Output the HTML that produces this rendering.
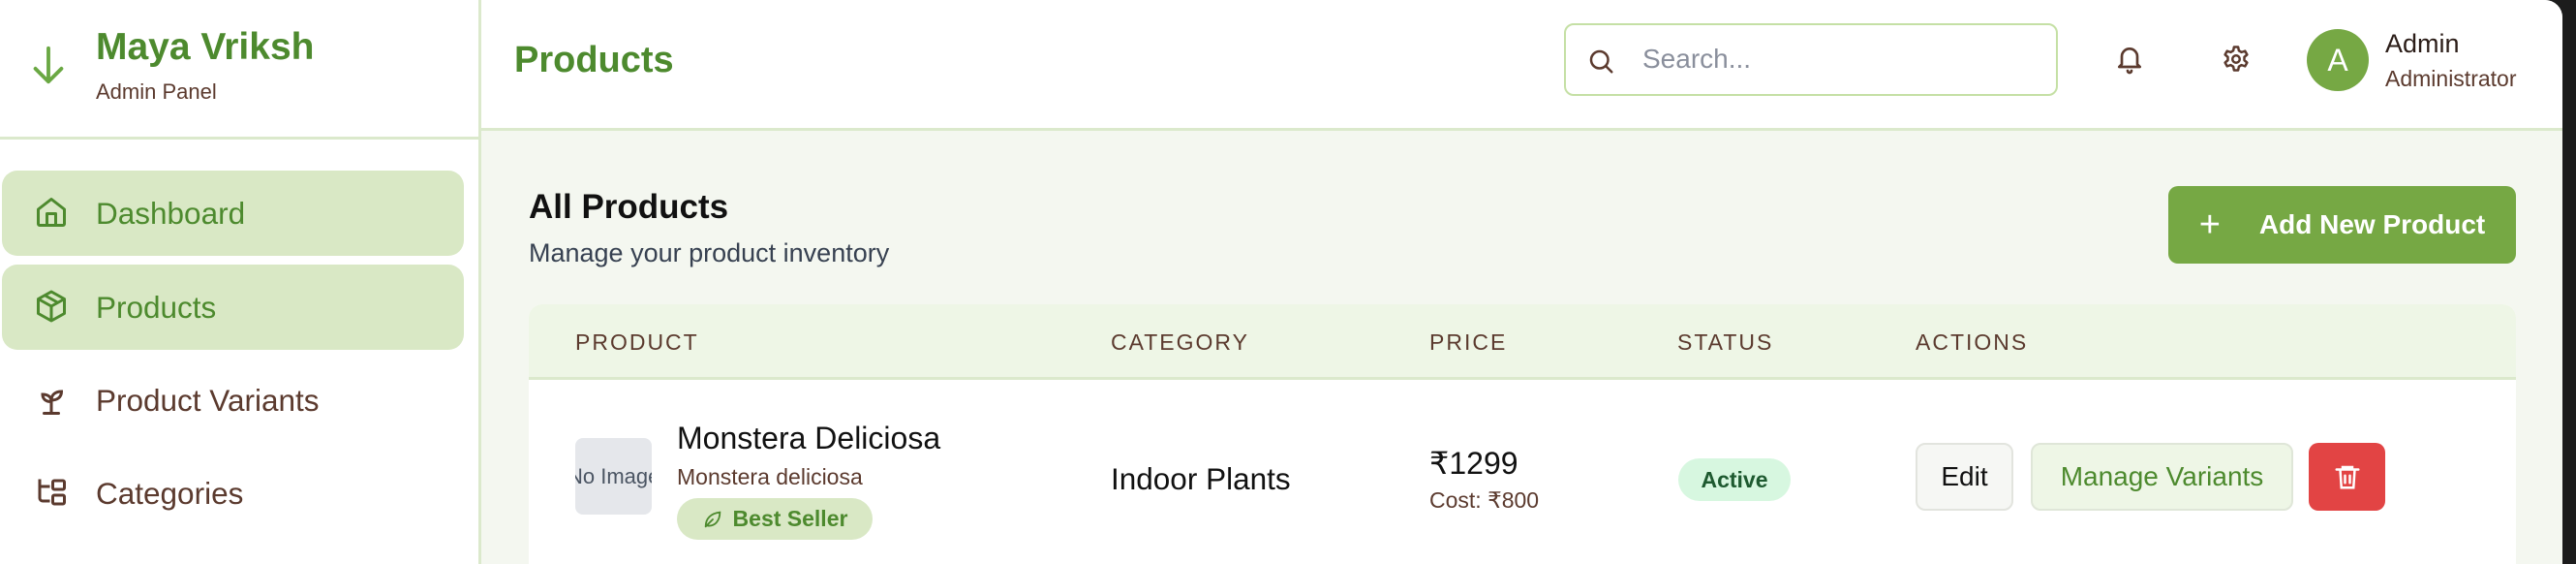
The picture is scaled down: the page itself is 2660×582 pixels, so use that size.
<!DOCTYPE html>
<html><head><meta charset="utf-8"><style>
*{box-sizing:border-box;margin:0;padding:0}
body{width:2660px;height:582px;overflow:hidden;background:#1c1c1c;font-family:"Liberation Sans",sans-serif;position:relative}
.app{position:absolute;left:0;top:0;width:2646px;height:582px;background:#f4f7f0;border-top-right-radius:18px;overflow:hidden}
.a{position:absolute}
.side{left:0;top:0;width:497px;height:582px;background:#fff;border-right:3px solid #dbe9cc}
.nav{left:2px;width:477px;height:88px;border-radius:16px;background:#d9e8c5}
.nt{font-size:31.5px;color:#5b3a2e;left:99px}
.hdr{left:497px;top:0;width:2149px;height:135px;background:#fff;border-bottom:3px solid #dbe9cc}
.th{font-size:23px;letter-spacing:2px;color:#5b3a2e;top:340px}
.btn{border-radius:10px;display:flex;align-items:center;justify-content:center;font-size:28px}
</style></head><body><div class="app">
<div class="a side"></div>
<div class="a" style="left:0;top:141px;width:497px;height:3px;background:#dbe9cc"></div>
<svg class="a" style="left:27px;top:44px" width="46" height="46" viewBox="0 0 24 24" fill="none" stroke="#6aa843" stroke-width="2" stroke-linecap="round" stroke-linejoin="round"><path d="M12 3v18M5 14l7 7 7-7"/></svg>
<div class="a" style="left:99px;top:27px;font-size:39px;font-weight:bold;color:#4d8a2e">Maya Vriksh</div>
<div class="a" style="left:99px;top:82px;font-size:22px;color:#5b3a2e">Admin Panel</div>
<div class="a nav" style="top:176px"></div>
<div class="a nav" style="top:273px"></div>
<svg class="a" style="left:35px;top:201px" width="36" height="36" viewBox="0 0 24 24" fill="none" stroke="#4d8a2e" stroke-width="2" stroke-linejoin="round"><path d="M3 10l9-7 9 7v10a1 1 0 0 1-1 1H4a1 1 0 0 1-1-1z"/><path d="M9 21v-8h6v8"/></svg>
<div class="a nt" style="top:202px;color:#4d8a2e">Dashboard</div>
<svg class="a" style="left:35px;top:298px" width="36" height="36" viewBox="0 0 24 24" fill="none" stroke="#4d8a2e" stroke-width="2" stroke-linejoin="round"><path d="M12 2l9 5v10l-9 5-9-5V7z"/><path d="M3 7l9 5 9-5M12 12v10M7.5 4.5l9 5"/></svg>
<div class="a nt" style="top:299px;color:#4d8a2e">Products</div>
<svg class="a" style="left:35px;top:395px" width="36" height="36" viewBox="0 0 24 24" fill="none" stroke="#5b3a2e" stroke-width="2" stroke-linecap="round"><path d="M7 21h10M12 21v-9M12 12c0-4 3-6 7-6 0 4-3 6-7 6zM12 13c0-3-2-5-6-5 0 3 2 5 6 5z"/></svg>
<div class="a nt" style="top:395px">Product Variants</div>
<svg class="a" style="left:35px;top:490px" width="36" height="36" viewBox="0 0 24 24" fill="none" stroke="#5b3a2e" stroke-width="2" stroke-linejoin="round"><path d="M4 3v13a2 2 0 0 0 2 2h5M4 8h7"/><rect x="13" y="4" width="8" height="6" rx="1"/><rect x="13" y="14" width="8" height="6" rx="1"/></svg>
<div class="a nt" style="top:491px">Categories</div>

<div class="a hdr"></div>
<div class="a" style="left:531px;top:41px;font-size:38px;font-weight:bold;color:#4d8a2e">Products</div>
<div class="a" style="left:1615px;top:24px;width:510px;height:75px;border:2px solid #c5e0a5;border-radius:10px;background:#fff"></div>
<svg class="a" style="left:1638px;top:48px" width="30" height="30" viewBox="0 0 24 24" fill="none" stroke="#5b3a2e" stroke-width="2" stroke-linecap="round"><circle cx="11" cy="11" r="7"/><path d="M16 16l5 5"/></svg>
<div class="a" style="left:1696px;top:45px;font-size:28px;color:#8a8f9c">Search...</div>
<svg class="a" style="left:2183px;top:45px" width="32" height="32" viewBox="0 0 24 24" fill="none" stroke="#5b3a2e" stroke-width="2" stroke-linecap="round" stroke-linejoin="round"><path d="M6 16V10a6 6 0 0 1 12 0v6l2 2H4z"/><path d="M10.5 21a1.5 1.5 0 0 0 3 0"/></svg>
<svg class="a" style="left:2294px;top:46px" width="30" height="30" viewBox="0 0 24 24" fill="none" stroke="#5b3a2e" stroke-width="2" stroke-linejoin="round"><circle cx="12" cy="12" r="3"/><path d="M10.3 2h3.4l.6 3 2.2 1.3 2.9-1 1.7 3-2.3 2v2.6l2.3 2-1.7 3-2.9-1-2.2 1.3-.6 3h-3.4l-.6-3-2.2-1.3-2.9 1-1.7-3 2.3-2v-2.6l-2.3-2 1.7-3 2.9 1 2.2-1.3z"/></svg>
<div class="a" style="left:2382px;top:30px;width:64px;height:64px;border-radius:50%;background:#76a844;color:#fff;font-size:32px;display:flex;align-items:center;justify-content:center">A</div>
<div class="a" style="left:2463px;top:30px;font-size:27px;color:#2b1d18">Admin</div>
<div class="a" style="left:2463px;top:68px;font-size:23px;color:#5b3a2e">Administrator</div>

<div class="a" style="left:546px;top:194px;font-size:35px;font-weight:bold;color:#111">All Products</div>
<div class="a" style="left:546px;top:246px;font-size:27px;color:#374151">Manage your product inventory</div>
<div class="a btn" style="left:2239px;top:192px;width:359px;height:80px;background:#76a844;color:#fff;font-weight:bold;font-size:28px"><span style="font-weight:normal;font-size:38px;margin-right:40px">+</span>Add New Product</div>

<div class="a" style="left:546px;top:314px;width:2052px;height:268px;background:#fff;border-radius:14px 14px 0 0;overflow:hidden">
<div class="a" style="left:0;top:0;width:100%;height:78px;background:#eef6e6;border-bottom:3px solid #dbe9cc"></div>
</div>
<div class="a th" style="left:594px">PRODUCT</div>
<div class="a th" style="left:1147px">CATEGORY</div>
<div class="a th" style="left:1476px">PRICE</div>
<div class="a th" style="left:1732px">STATUS</div>
<div class="a th" style="left:1978px">ACTIONS</div>

<div class="a" style="left:594px;top:452px;width:79px;height:79px;background:#e5e7eb;border-radius:8px;overflow:hidden;white-space:nowrap;font-size:22px;color:#4b5563;line-height:79px;text-indent:-8px">No Image</div>
<div class="a" style="left:699px;top:434px;font-size:32px;color:#111">Monstera Deliciosa</div>
<div class="a" style="left:699px;top:479px;font-size:23px;color:#5b3a2e">Monstera deliciosa</div>
<div class="a" style="left:699px;top:514px;width:202px;height:43px;border-radius:22px;background:#d9e8c5;color:#4d8a2e;font-weight:bold;font-size:23px;display:flex;align-items:center;justify-content:center"><svg width="22" height="22" viewBox="0 0 24 24" fill="none" stroke="#4d8a2e" stroke-width="2" stroke-linecap="round" style="margin-right:10px"><path d="M4 20c0-9 6-15 16-16 0 10-6 16-14 15M4 20l8-8"/></svg>Best Seller</div>
<div class="a" style="left:1147px;top:476px;font-size:31.5px;color:#111">Indoor Plants</div>
<div class="a" style="left:1476px;top:459px;font-size:32px;color:#111">₹1299</div>
<div class="a" style="left:1476px;top:503px;font-size:23px;color:#5b3a2e">Cost: ₹800</div>
<div class="a" style="left:1733px;top:473px;width:116px;height:44px;border-radius:22px;background:#d7f7e0;color:#1e5a30;font-weight:bold;font-size:23px;display:flex;align-items:center;justify-content:center">Active</div>
<div class="a btn" style="left:1978px;top:457px;width:101px;height:70px;background:#f6f7f4;border:2px solid #e2e4de;color:#111">Edit</div>
<div class="a btn" style="left:2097px;top:457px;width:271px;height:70px;background:#eef6e6;border:2px solid #dfe6d8;color:#4d8a2e">Manage Variants</div>
<div class="a btn" style="left:2384px;top:457px;width:79px;height:70px;background:#e24444"><svg width="30" height="30" viewBox="0 0 24 24" fill="none" stroke="#fff" stroke-width="2" stroke-linecap="round"><path d="M3 6h18M8 6V4h8v2M6 6l1 15h10l1-15M10 11v6M14 11v6"/></svg></div>
</div></body></html>
